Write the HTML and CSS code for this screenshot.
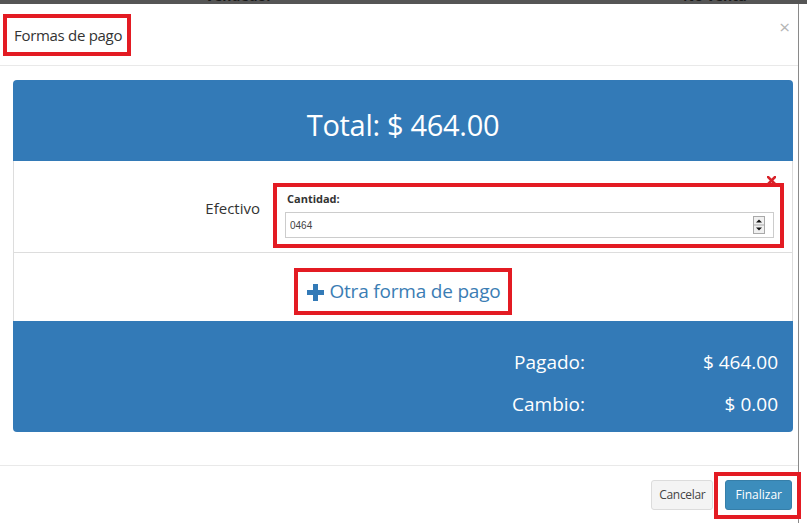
FILE: index.html
```html
<!DOCTYPE html>
<html lang="es">
<head>
<meta charset="utf-8">
<title>Formas de pago</title>
<link rel="stylesheet" href="styles.css">
</head>
<body>
<div class="backdrop-strip">
  <span class="bg-col bg-col-1">Vendedor</span>
  <span class="bg-col">No venta</span>
</div>
<div class="modal">
  <div class="modal-header">
    <div class="mark title-mark"><h4 class="modal-title">Formas de pago</h4></div>
    <button class="close" type="button">×</button>
  </div>
  <div class="modal-body">
    <div class="panel">
      <div class="panel-heading">Total: $ 464.00</div>
      <div class="pay-row">
        <div class="pay-label">Efectivo</div>
        <div class="mark pay-box">
          <svg class="remove" width="9" height="9" viewBox="0 0 9 9"><path d="M1 1L8 8M8 1L1 8" stroke="#d8232a" stroke-width="2.6" stroke-linecap="square"/></svg>
          <label class="qty-label" for="qty">Cantidad:</label>
          <div class="qty">
            <input id="qty" type="text" value="0464">
            <svg class="spinner" width="12" height="18" viewBox="0 0 12 18">
              <rect x="0.5" y="0.5" width="11" height="17" fill="#f0f0f0" stroke="#a9a9a9"/>
              <line x1="1" y1="9" x2="11" y2="9" stroke="#a9a9a9"/>
              <path d="M3 6.5h6L6 3.5z" fill="#111"/>
              <path d="M3 11.5h6L6 14.5z" fill="#111"/>
            </svg>
          </div>
        </div>
      </div>
      <div class="add-row">
        <a class="mark add-link" href="#">
          <svg class="plus" width="17" height="17" viewBox="0 0 17 17"><path d="M6 0h5v6h6v5h-6v6h-5v-6h-6v-5h6z" fill="#337ab7"/></svg>
          <span>Otra forma de pago</span>
        </a>
      </div>
      <div class="panel-footer">
        <div class="sum-label">Pagado:</div>
        <div class="sum-value">$ 464.00</div>
        <div class="sum-label">Cambio:</div>
        <div class="sum-value">$ 0.00</div>
      </div>
    </div>
  </div>
  <div class="modal-footer">
    <button class="btn btn-default" type="button">Cancelar</button>
    <div class="mark btn-mark"><button class="btn btn-primary" type="button">Finalizar</button></div>
  </div>
</div>
</body>
</html>
```

FILE: styles.css
```css
html, body {
  margin: 0;
  padding: 0;
}
body {
  width: 807px;
  height: 523px;
  overflow: hidden;
  background: #fff;
  font-family: "Open Sans", "Noto Sans", sans-serif;
  color: #333;
}
.backdrop-strip {
  height: 4px;
  background: #555;
  overflow: hidden;
  display: flex;
  padding-left: 205px;
}
.bg-col {
  font-size: 14px;
  font-weight: 700;
  line-height: 14px;
  margin-top: -11px;
  color: #1a1a1a;
}
.bg-col-1 {
  width: 478px;
}
.modal {
  width: 799px;
  height: 519px;
  box-sizing: border-box;
  border-right: 1px solid #8a8a8a;
  background: #fff;
  display: flex;
  flex-direction: column;
}
.mark {
  border: 4px solid #e31b23;
}
.modal-header {
  height: 62px;
  box-sizing: border-box;
  border-bottom: 1px solid #e9e9e9;
  display: flex;
  align-items: flex-start;
  padding: 10px 0 0 3px;
}
.title-mark {
  padding: 0 5px 0 7px;
}
.modal-title {
  margin: 0;
  font-size: 15px;
  font-weight: 400;
  letter-spacing: -0.3px;
  line-height: 34px;
  color: #333;
}
.close {
  margin-left: auto;
  margin-right: 8px;
  margin-top: 4px;
  padding: 0;
  border: 0;
  background: none;
  font-family: "Open Sans", sans-serif;
  font-size: 19px;
  line-height: 1;
  color: #b5b5b5;
}
.modal-body {
  padding: 14px 5px 33px 13px;
}
.panel {
  border-radius: 4px;
}
.panel-heading {
  height: 81px;
  box-sizing: border-box;
  padding-top: 8px;
  line-height: 73px;
  background: #337ab7;
  color: #fff;
  font-size: 29px;
  letter-spacing: -0.3px;
  text-align: center;
  border-radius: 4px 4px 0 0;
}
.pay-row {
  display: grid;
  grid-template-columns: 246px 1fr;
  column-gap: 13px;
  padding: 22px 8px 4px 0;
  border-left: 1px solid #ddd;
  border-right: 1px solid #ddd;
  border-bottom: 1px solid #ddd;
}
.pay-label {
  padding-top: 15px;
  text-align: right;
  font-size: 15px;
  line-height: 20px;
  color: #333;
}
.pay-box {
  position: relative;
  padding: 4px 6px 6px 8px;
  display: flex;
  flex-direction: column;
}
.remove {
  position: absolute;
  top: -11px;
  right: 4px;
}
.qty-label {
  margin-left: 2px;
  margin-bottom: 5px;
  font-size: 11px;
  font-weight: 700;
  line-height: 16px;
  color: #333;
}
.qty {
  height: 26px;
  box-sizing: border-box;
  border: 1px solid #ccc;
  display: flex;
  align-items: center;
  padding: 0 8px 0 4px;
  background: #fff;
}
.qty input {
  flex: 1;
  min-width: 0;
  border: 0;
  padding: 0;
  outline: none;
  background: transparent;
  font-family: "Liberation Sans", Arial, sans-serif;
  font-size: 10px;
  color: #444;
}
.spinner {
  display: block;
}
.add-row {
  height: 68px;
  box-sizing: border-box;
  padding-top: 15px;
  border-left: 1px solid #ddd;
  border-right: 1px solid #ddd;
  display: flex;
  justify-content: center;
  align-items: flex-start;
}
.add-link {
  height: 37px;
  box-sizing: content-box;
  padding: 2px 7px 0 9px;
  display: flex;
  align-items: center;
  gap: 5px;
  text-decoration: none;
  color: #3b7db4;
  font-size: 19px;
  letter-spacing: -0.2px;
  line-height: 1;
}
.add-link span {
  padding-bottom: 2px;
}
.plus {
  display: block;
}
.panel-footer {
  display: grid;
  grid-template-columns: 1fr 193px;
  padding: 20px 15px 7px 0;
  background: #337ab7;
  color: #fff;
  font-size: 19px;
  line-height: 42px;
  text-align: right;
  border-radius: 0 0 4px 4px;
}
.modal-footer {
  border-top: 1px solid #e9e9e9;
  display: flex;
  justify-content: flex-end;
  align-items: flex-start;
  gap: 1px;
  padding-top: 6px;
}
.btn {
  height: 30px;
  box-sizing: border-box;
  border-radius: 3px;
  font-family: "Open Sans", sans-serif;
  font-size: 12px;
  line-height: 28px;
  padding: 0 9px;
  cursor: pointer;
}
.btn-default {
  margin-top: 8px;
  padding: 0 7px;
  letter-spacing: -0.3px;
  background: #f4f4f4;
  border: 1px solid #dcdcdc;
  color: #444;
}
.btn-mark {
  margin-right: -3px;
  padding: 4px 5px 5px 7px;
}
.btn-primary {
  display: block;
  background: #3c8dbc;
  border: 1px solid #367fa9;
  color: #fff;
}
```
